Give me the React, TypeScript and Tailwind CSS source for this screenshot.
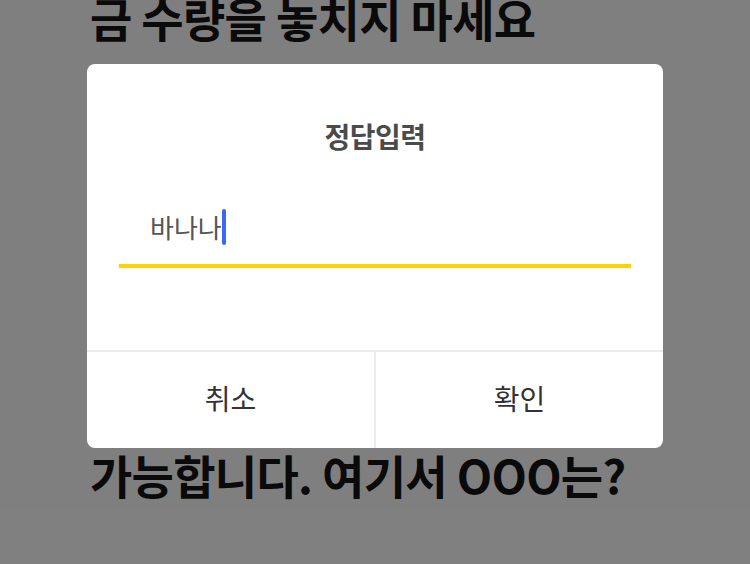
import React from 'react';

const font = { fontFamily: '"Noto Sans CJK KR", "Noto Sans", sans-serif' };

/**
 * AnswerDialog - modal for typing the quiz answer
 */
const AnswerDialog: React.FC = () => {
    return (
        <div className="w-[576px] h-[384px] rounded-[8px] bg-white flex flex-col overflow-hidden">
            {/* Title */}
            <p className="pt-[54px] text-center text-[28px] leading-[36px] font-bold text-[#4b4b4b] tracking-[-0.5px]">정답입력</p>

            {/* Input */}
            <div className="mx-[32px] mt-[55px] pb-[19px] border-b-[4px] border-[#ffd200]">
                <div className="pl-[31px] flex items-center h-[36px]">
                    <span className="text-[26px] leading-[36px] text-[#555555]">바나나</span>
                    <span className="inline-block w-[4px] h-[36px] rounded-[2px] bg-[#3d68f2]" />
                </div>
            </div>

            <div className="flex-1" />

            {/* Actions */}
            <div className="h-[98px] border-t-[2px] border-[#ebebeb] flex">
                <button className="flex-1 flex items-center justify-center pb-[4px] text-[28px] text-[#333333]">취소</button>
                <div className="w-[2px] bg-[#ebebeb]" />
                <button className="flex-1 flex items-center justify-center pb-[4px] text-[28px] text-[#333333]">확인</button>
            </div>
        </div>
    );
};

export default function App() {
    return (
        <div className="relative w-[750px] h-[564px] overflow-hidden bg-white" style={font}>
            {/* Page behind the modal */}
            <div className="px-[90px] -mt-[15px] text-[46px] leading-[64px] font-bold text-[#141414] tracking-[-0.7px] whitespace-nowrap">
                <p>금 수량을 놓치지 마세요</p>
                <p className="mt-[393px]">가능합니다. 여기서 OOO는?</p>
            </div>

            {/* Dim overlay */}
            <div className="absolute inset-0 bg-black/50 flex justify-center items-start pt-[64px]">
                <AnswerDialog />
            </div>
        </div>
    );
}
